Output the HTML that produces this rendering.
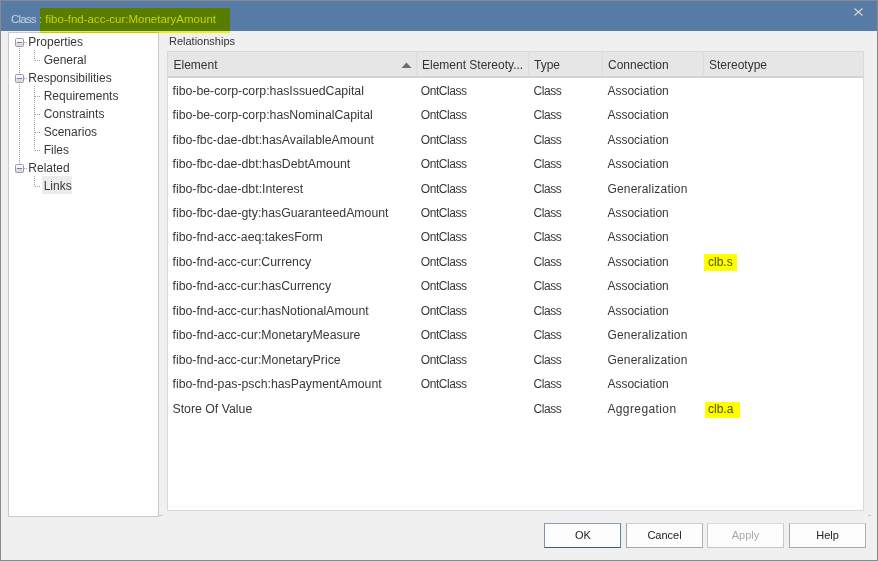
<!DOCTYPE html>
<html><head><meta charset="utf-8">
<style>
html,body{margin:0;padding:0;}
body{width:878px;height:561px;position:relative;overflow:hidden;background:#f0f0f0;font-family:"Liberation Sans",sans-serif;color:#383838;}
.a{position:absolute;white-space:pre;}
#frame{position:absolute;left:0;top:0;width:876px;height:559px;border:1px solid #8a8a8a;}
#title{position:absolute;left:1px;top:1px;width:876px;height:30px;background:#567ca6;}
#hl{position:absolute;left:40px;top:8px;width:190px;height:25px;background:#ffff00;mix-blend-mode:multiply;}
#ttext{left:11px;top:4px;font-size:11.5px;line-height:30px;height:30px;color:#cad3de;}
#close{left:851px;top:4px;}
#tree{position:absolute;left:8px;top:32px;width:149px;height:483px;border:1px solid #c8c8c8;background:#fff;}
.tl{font-size:12px;line-height:18px;height:18px;}
#rel{left:169px;top:34px;font-size:11px;line-height:14px;color:#333;}
#list{position:absolute;left:167px;top:51px;width:695px;height:458px;border:1px solid #d9d9d9;background:#fff;}
#hdr{position:absolute;left:168px;top:52px;width:695px;height:24px;background:#e6e6e6;border-bottom:2px solid #d2d2d2;}
.hd{font-size:12px;line-height:26px;top:52px;color:#333;}
.div{position:absolute;top:52px;width:1px;height:24px;background:#dddddd;}
.c{font-size:12px;line-height:24.45px;height:24.45px;}
.e{font-size:12.3px;}
.btn{position:absolute;top:523px;width:75px;height:23px;border:1px solid #adadad;border-color:#cfcfcf #b0b0b0 #a6a6a6 #a6a6a6;background:#fdfdfd;font-size:11px;line-height:23px;text-align:center;color:#222;}
.btn.def{text-indent:1px;border-color:#8c9db2 #64809f #3e5a7f #8093ab;}
.btn.dis{color:#a8a8a8;border-color:#dcdcdc #cacaca #c6c6c6 #c6c6c6;}
.hly{position:absolute;background:#ffff00;mix-blend-mode:multiply;}
</style></head><body>
<div id="title"></div>
<div class="a" id="ttext"><span style="letter-spacing:-0.8px">Class</span> : fibo-fnd-acc-cur:MonetaryAmount</div>
<svg class="a" id="close" width="14" height="14" viewBox="0 0 14 14"><path d="M3.5 4.5 L11.5 11.5 M11.5 4.5 L3.5 11.5" stroke="#d8d8d8" stroke-width="1.1" fill="none"/></svg>
<div id="tree"></div>
<svg class="a" style="left:0;top:0" width="170" height="200" viewBox="0 0 170 200">
<path d="M24 42.5 H28" stroke="#a0a0a0" stroke-width="1" stroke-dasharray="1 1" fill="none"/>
<path d="M35 60.5 H41" stroke="#a0a0a0" stroke-width="1" stroke-dasharray="1 1" fill="none"/>
<path d="M24 78.5 H28" stroke="#a0a0a0" stroke-width="1" stroke-dasharray="1 1" fill="none"/>
<path d="M35 96.5 H41" stroke="#a0a0a0" stroke-width="1" stroke-dasharray="1 1" fill="none"/>
<path d="M35 114.5 H41" stroke="#a0a0a0" stroke-width="1" stroke-dasharray="1 1" fill="none"/>
<path d="M35 132.5 H41" stroke="#a0a0a0" stroke-width="1" stroke-dasharray="1 1" fill="none"/>
<path d="M35 150.5 H41" stroke="#a0a0a0" stroke-width="1" stroke-dasharray="1 1" fill="none"/>
<path d="M24 168.5 H28" stroke="#a0a0a0" stroke-width="1" stroke-dasharray="1 1" fill="none"/>
<path d="M35 186.5 H41" stroke="#a0a0a0" stroke-width="1" stroke-dasharray="1 1" fill="none"/>
<path d="M19.5 48 V164" stroke="#a0a0a0" stroke-width="1" stroke-dasharray="1 1" fill="none"/>
<path d="M34.5 50 V60.5" stroke="#a0a0a0" stroke-width="1" stroke-dasharray="1 1" fill="none"/>
<path d="M34.5 86 V150.5" stroke="#a0a0a0" stroke-width="1" stroke-dasharray="1 1" fill="none"/>
<path d="M34.5 176 V186.5" stroke="#a0a0a0" stroke-width="1" stroke-dasharray="1 1" fill="none"/>
<defs><linearGradient id="g0" x1="0" y1="0" x2="0" y2="1"><stop offset="0" stop-color="#ffffff"/><stop offset="0.45" stop-color="#f4f4f4"/><stop offset="0.55" stop-color="#e2e2e2"/><stop offset="1" stop-color="#d6d6d6"/></linearGradient></defs>
<rect x="15.5" y="38.5" width="8" height="8" rx="1" fill="url(#g0)" stroke="#9c9c9c" stroke-width="1"/>
<path d="M17 42.5 H22" stroke="#6a7cc4" stroke-width="1"/>
<defs><linearGradient id="g2" x1="0" y1="0" x2="0" y2="1"><stop offset="0" stop-color="#ffffff"/><stop offset="0.45" stop-color="#f4f4f4"/><stop offset="0.55" stop-color="#e2e2e2"/><stop offset="1" stop-color="#d6d6d6"/></linearGradient></defs>
<rect x="15.5" y="74.5" width="8" height="8" rx="1" fill="url(#g2)" stroke="#9c9c9c" stroke-width="1"/>
<path d="M17 78.5 H22" stroke="#6a7cc4" stroke-width="1"/>
<defs><linearGradient id="g7" x1="0" y1="0" x2="0" y2="1"><stop offset="0" stop-color="#ffffff"/><stop offset="0.45" stop-color="#f4f4f4"/><stop offset="0.55" stop-color="#e2e2e2"/><stop offset="1" stop-color="#d6d6d6"/></linearGradient></defs>
<rect x="15.5" y="164.5" width="8" height="8" rx="1" fill="url(#g7)" stroke="#9c9c9c" stroke-width="1"/>
<path d="M17 168.5 H22" stroke="#6a7cc4" stroke-width="1"/>
</svg>
<div class="a" style="left:42px;top:176px;width:30px;height:18px;background:#ececec"></div>
<div class="a tl" style="left:28.3px;top:33.0px">Properties</div>
<div class="a tl" style="left:43.7px;top:51.0px">General</div>
<div class="a tl" style="left:28.3px;top:69.0px">Responsibilities</div>
<div class="a tl" style="left:43.7px;top:87.0px">Requirements</div>
<div class="a tl" style="left:43.7px;top:105.0px">Constraints</div>
<div class="a tl" style="left:43.7px;top:123.0px">Scenarios</div>
<div class="a tl" style="left:43.7px;top:141.0px">Files</div>
<div class="a tl" style="left:28.3px;top:159.0px">Related</div>
<div class="a tl" style="left:43.7px;top:177.0px">Links</div>
<div class="a" id="rel">Relationships</div>
<div id="list"></div>
<div id="hdr"></div>
<div class="div" style="left:416px"></div>
<div class="div" style="left:528px"></div>
<div class="div" style="left:602px"></div>
<div class="div" style="left:703px"></div>
<div class="a hd" style="left:173.5px">Element</div>
<div class="a hd" style="left:422px">Element Stereoty...</div>
<div class="a hd" style="left:534px">Type</div>
<div class="a hd" style="left:608px">Connection</div>
<div class="a hd" style="left:709px">Stereotype</div>
<svg class="a" style="left:400px;top:61px" width="13" height="8" viewBox="0 0 13 8"><path d="M1.5 7 L6.5 1.5 L11.5 7 Z" fill="#6e6e6e"/></svg>
<div class="a c e" style="left:172.5px;top:78.70px">fibo-be-corp-corp:hasIssuedCapital</div>
<div class="a c" style="left:420.8px;top:78.70px;letter-spacing:-0.45px">OntClass</div>
<div class="a c" style="left:533.4px;top:78.70px;letter-spacing:-0.4px">Class</div>
<div class="a c" style="left:607.4px;top:78.70px">Association</div>
<div class="a c e" style="left:172.5px;top:103.15px">fibo-be-corp-corp:hasNominalCapital</div>
<div class="a c" style="left:420.8px;top:103.15px;letter-spacing:-0.45px">OntClass</div>
<div class="a c" style="left:533.4px;top:103.15px;letter-spacing:-0.4px">Class</div>
<div class="a c" style="left:607.4px;top:103.15px">Association</div>
<div class="a c e" style="left:172.5px;top:127.60px">fibo-fbc-dae-dbt:hasAvailableAmount</div>
<div class="a c" style="left:420.8px;top:127.60px;letter-spacing:-0.45px">OntClass</div>
<div class="a c" style="left:533.4px;top:127.60px;letter-spacing:-0.4px">Class</div>
<div class="a c" style="left:607.4px;top:127.60px">Association</div>
<div class="a c e" style="left:172.5px;top:152.05px">fibo-fbc-dae-dbt:hasDebtAmount</div>
<div class="a c" style="left:420.8px;top:152.05px;letter-spacing:-0.45px">OntClass</div>
<div class="a c" style="left:533.4px;top:152.05px;letter-spacing:-0.4px">Class</div>
<div class="a c" style="left:607.4px;top:152.05px">Association</div>
<div class="a c e" style="left:172.5px;top:176.50px">fibo-fbc-dae-dbt:Interest</div>
<div class="a c" style="left:420.8px;top:176.50px;letter-spacing:-0.45px">OntClass</div>
<div class="a c" style="left:533.4px;top:176.50px;letter-spacing:-0.4px">Class</div>
<div class="a c" style="left:607.4px;top:176.50px;letter-spacing:0.2px">Generalization</div>
<div class="a c e" style="left:172.5px;top:200.95px">fibo-fbc-dae-gty:hasGuaranteedAmount</div>
<div class="a c" style="left:420.8px;top:200.95px;letter-spacing:-0.45px">OntClass</div>
<div class="a c" style="left:533.4px;top:200.95px;letter-spacing:-0.4px">Class</div>
<div class="a c" style="left:607.4px;top:200.95px">Association</div>
<div class="a c e" style="left:172.5px;top:225.40px">fibo-fnd-acc-aeq:takesForm</div>
<div class="a c" style="left:420.8px;top:225.40px;letter-spacing:-0.45px">OntClass</div>
<div class="a c" style="left:533.4px;top:225.40px;letter-spacing:-0.4px">Class</div>
<div class="a c" style="left:607.4px;top:225.40px">Association</div>
<div class="a c e" style="left:172.5px;top:249.85px">fibo-fnd-acc-cur:Currency</div>
<div class="a c" style="left:420.8px;top:249.85px;letter-spacing:-0.45px">OntClass</div>
<div class="a c" style="left:533.4px;top:249.85px;letter-spacing:-0.4px">Class</div>
<div class="a c" style="left:607.4px;top:249.85px">Association</div>
<div class="a c" style="left:708px;top:249.85px;color:#505050">clb.s</div>
<div class="a c e" style="left:172.5px;top:274.30px">fibo-fnd-acc-cur:hasCurrency</div>
<div class="a c" style="left:420.8px;top:274.30px;letter-spacing:-0.45px">OntClass</div>
<div class="a c" style="left:533.4px;top:274.30px;letter-spacing:-0.4px">Class</div>
<div class="a c" style="left:607.4px;top:274.30px">Association</div>
<div class="a c e" style="left:172.5px;top:298.75px">fibo-fnd-acc-cur:hasNotionalAmount</div>
<div class="a c" style="left:420.8px;top:298.75px;letter-spacing:-0.45px">OntClass</div>
<div class="a c" style="left:533.4px;top:298.75px;letter-spacing:-0.4px">Class</div>
<div class="a c" style="left:607.4px;top:298.75px">Association</div>
<div class="a c e" style="left:172.5px;top:323.20px">fibo-fnd-acc-cur:MonetaryMeasure</div>
<div class="a c" style="left:420.8px;top:323.20px;letter-spacing:-0.45px">OntClass</div>
<div class="a c" style="left:533.4px;top:323.20px;letter-spacing:-0.4px">Class</div>
<div class="a c" style="left:607.4px;top:323.20px;letter-spacing:0.2px">Generalization</div>
<div class="a c e" style="left:172.5px;top:347.65px">fibo-fnd-acc-cur:MonetaryPrice</div>
<div class="a c" style="left:420.8px;top:347.65px;letter-spacing:-0.45px">OntClass</div>
<div class="a c" style="left:533.4px;top:347.65px;letter-spacing:-0.4px">Class</div>
<div class="a c" style="left:607.4px;top:347.65px;letter-spacing:0.2px">Generalization</div>
<div class="a c e" style="left:172.5px;top:372.10px">fibo-fnd-pas-psch:hasPaymentAmount</div>
<div class="a c" style="left:420.8px;top:372.10px;letter-spacing:-0.45px">OntClass</div>
<div class="a c" style="left:533.4px;top:372.10px;letter-spacing:-0.4px">Class</div>
<div class="a c" style="left:607.4px;top:372.10px">Association</div>
<div class="a c e" style="left:172.5px;top:396.55px">Store Of Value</div>
<div class="a c" style="left:533.4px;top:396.55px;letter-spacing:-0.4px">Class</div>
<div class="a c" style="left:607.4px;top:396.55px;letter-spacing:0.4px">Aggregation</div>
<div class="a c" style="left:708px;top:396.55px;color:#505050">clb.a</div>
<div class="hly" style="left:704px;top:254px;width:33px;height:17px"></div>
<div class="hly" style="left:705px;top:402px;width:35px;height:16px"></div>
<div class="a" style="left:158px;top:515px;width:5px;height:1px;background:#c8c8c8"></div>
<div class="a" style="left:868px;top:515px;width:3px;height:1px;background:#c4c4c4"></div>
<div class="btn def" style="left:544px">OK</div>
<div class="btn" style="left:626px">Cancel</div>
<div class="btn dis" style="left:707px">Apply</div>
<div class="btn" style="left:789px">Help</div>
<div id="hl"></div>
<div id="frame"></div>
</body></html>
